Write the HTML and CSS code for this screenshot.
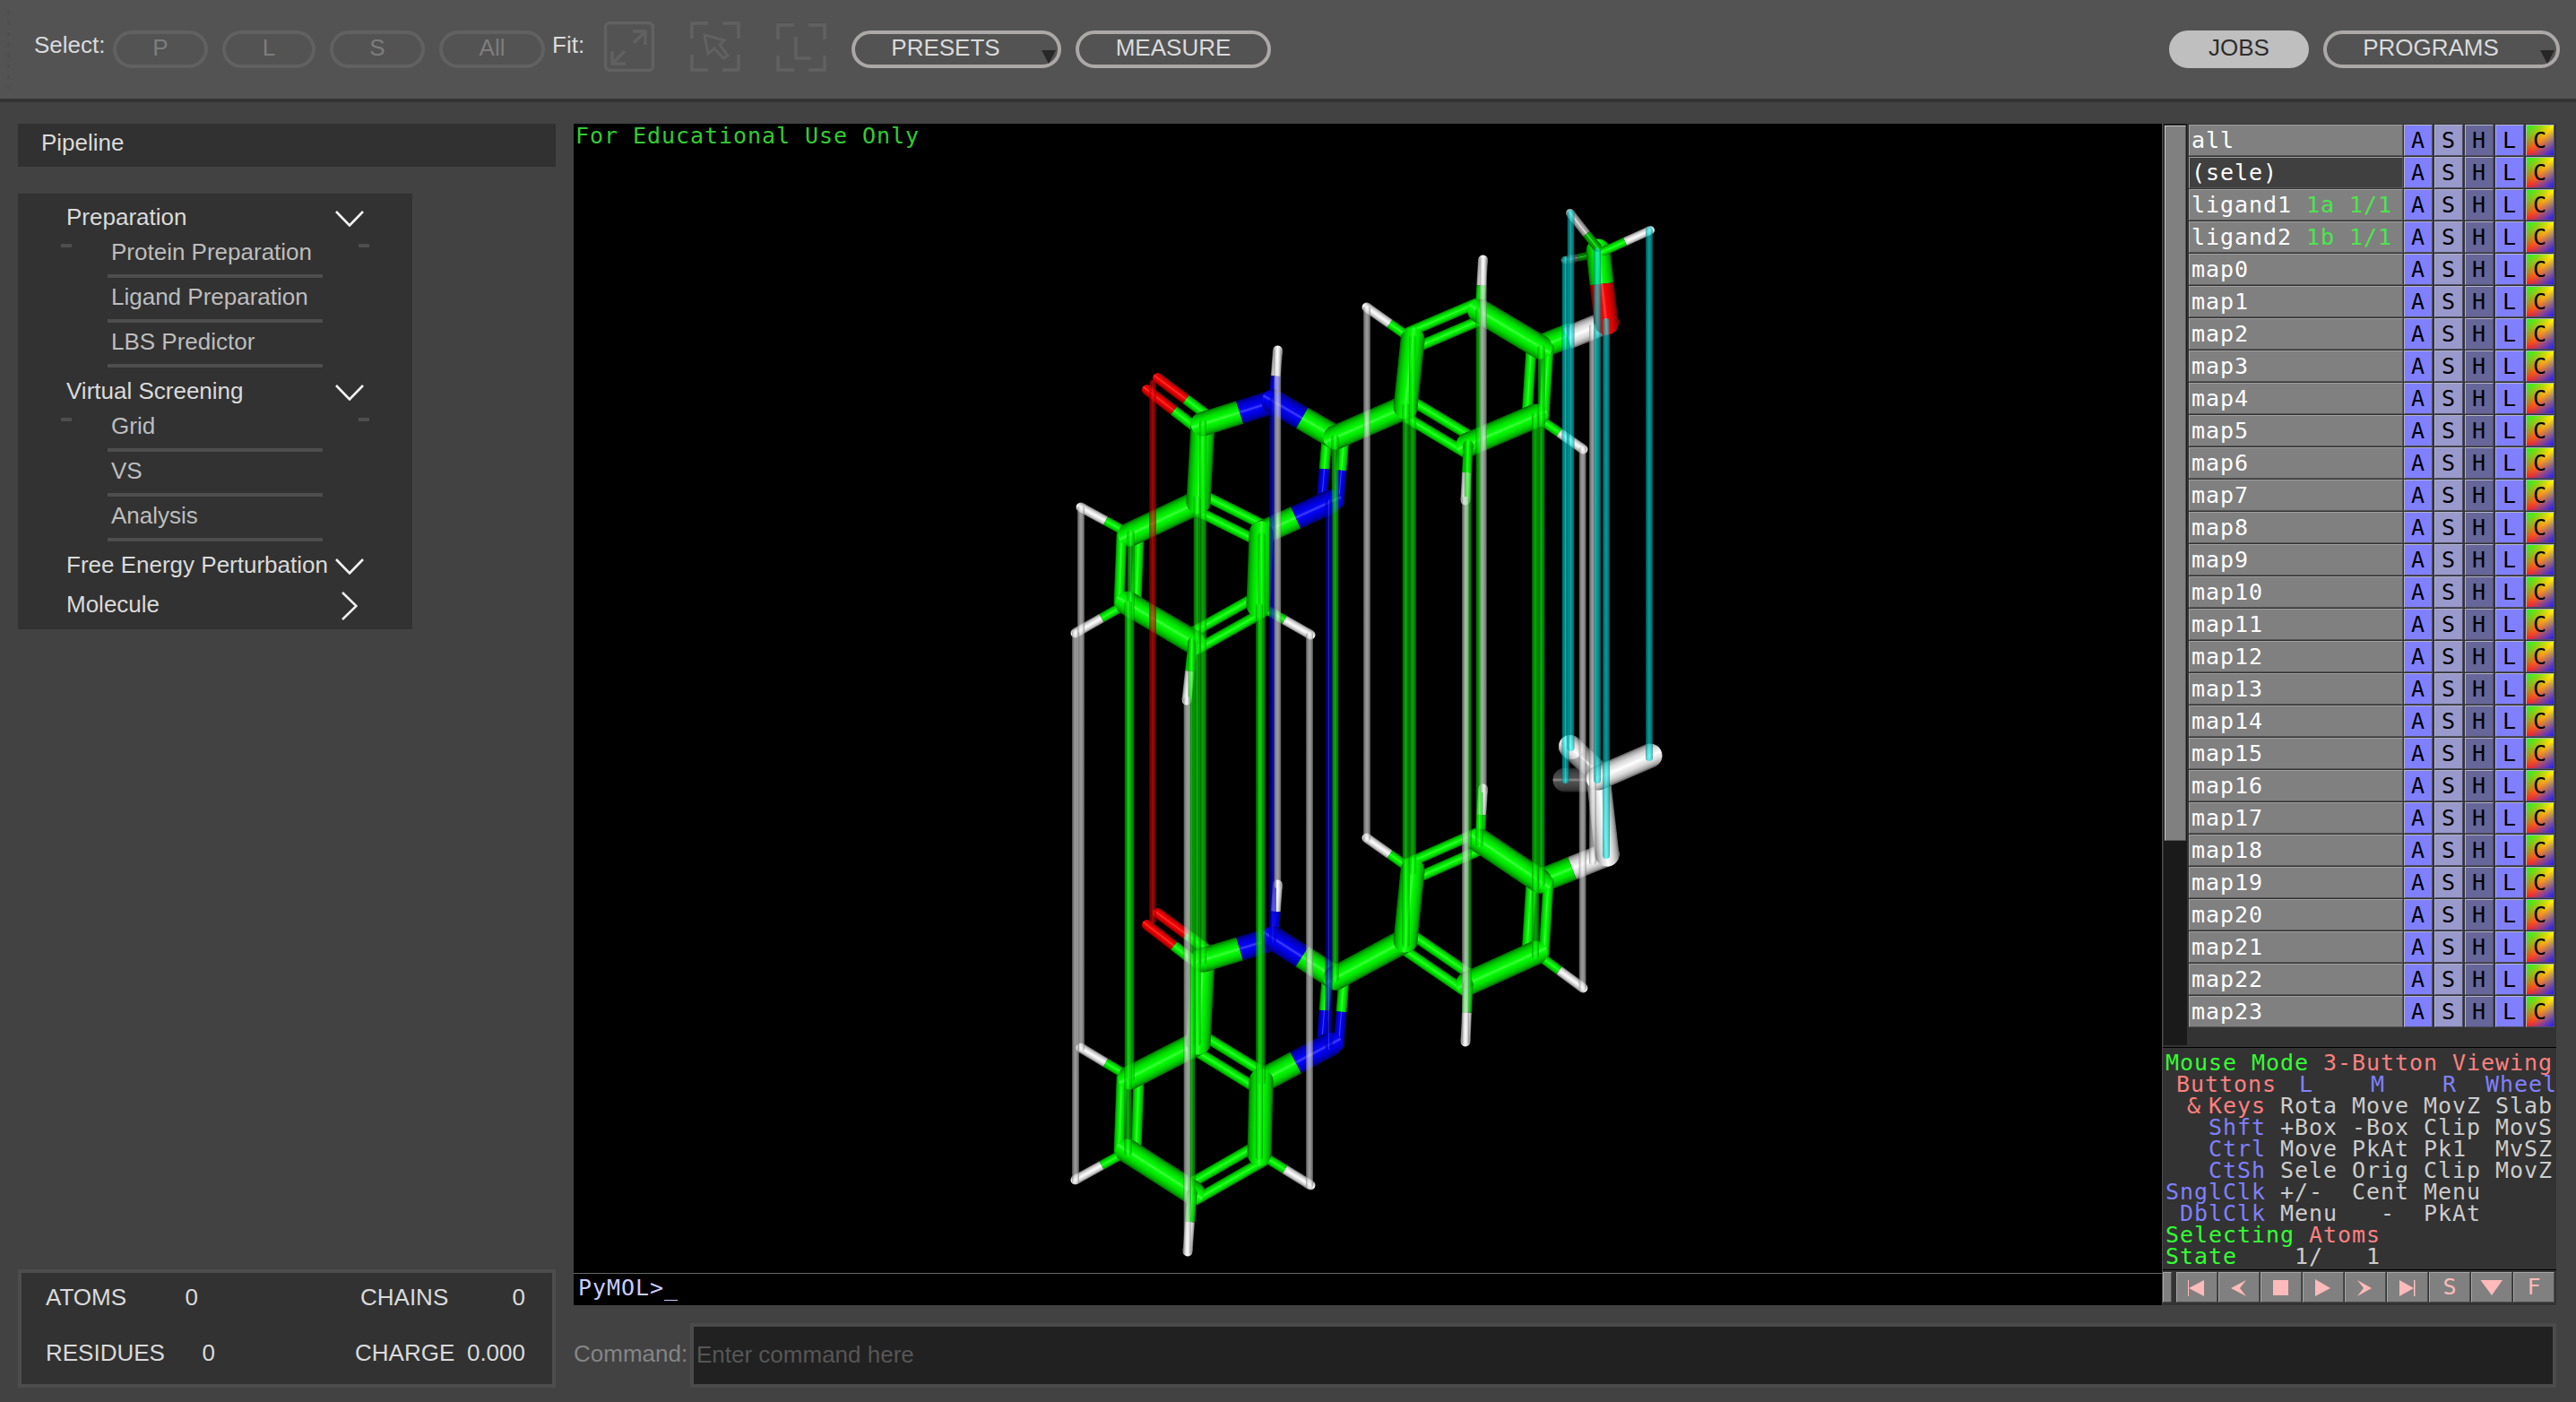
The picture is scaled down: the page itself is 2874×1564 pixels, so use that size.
FILE: index.html
```html
<!DOCTYPE html>
<html lang="en">
<head>
<meta charset="utf-8">
<title>Pipeline</title>
<link rel="stylesheet" href="styles.css">
</head>
<body>
<header class="toolbar">
  <div class="grip"></div>
  <span class="label select-label">Select:</span>
  <div class="select-group">
    <button class="pill off w106">P</button>
    <button class="pill off w104">L</button>
    <button class="pill off w106">S</button>
    <button class="pill off w118">All</button>
  </div>
  <span class="label fit-label">Fit:</span>
  <div class="fit-group">
    <svg class="fit" viewBox="0 0 56 56"><rect x="1.5" y="1.5" width="53" height="53" rx="5"/><path d="M32 11H46V26M46 11L33 24M9 33V47H24M10 46L23 33"/></svg>
    <svg class="fit" viewBox="0 0 56 56"><path d="M2 19V2H20M36 2H54V19M2 37V54H20M36 54H54V37"/><path class="thin" d="M16 15L38 21L33 26L42 38L37 41L27 30L20 36Z"/></svg>
    <svg class="fit" viewBox="0 0 56 56"><path d="M2 20V4H20M36 4H54V20M2 38V54H20M36 54H54V38M22 17V41H39"/></svg>
  </div>
  <div class="action-group">
    <button class="pill menu w234">PRESETS<i class="tri"></i></button>
    <button class="pill w218">MEASURE</button>
  </div>
  <div class="right-group">
    <button class="pill solid w156">JOBS</button>
    <button class="pill menu w264">PROGRAMS<i class="tri"></i></button>
  </div>
</header>
<main class="main">
  <aside class="left">
    <h1 class="title">Pipeline</h1>
    <nav class="tree">
      <div class="head">Preparation<svg class="chev" viewBox="0 0 32 18"><path d="M1 1L16 16.5L31 1"/></svg></div>
      <div class="group">
        <i class="dash"></i>
        <ul><li>Protein Preparation</li><li>Ligand Preparation</li><li>LBS Predictor</li></ul>
        <i class="dash"></i>
      </div>
      <div class="head">Virtual Screening<svg class="chev" viewBox="0 0 32 18"><path d="M1 1L16 16.5L31 1"/></svg></div>
      <div class="group">
        <i class="dash"></i>
        <ul><li>Grid</li><li>VS</li><li>Analysis</li></ul>
        <i class="dash"></i>
      </div>
      <div class="head fep">Free Energy Perturbation<svg class="chev" viewBox="0 0 32 18"><path d="M1 1L16 16.5L31 1"/></svg></div>
      <div class="head mol">Molecule<svg class="chev side" viewBox="0 0 18 32"><path d="M1 1L16.5 16L1 31"/></svg></div>
    </nav>
    <section class="stats">
      <div class="stat"><span>ATOMS</span><b class="n1">0</b><span class="end">CHAINS</span><b class="n2">0</b></div>
      <div class="stat"><span>RESIDUES</span><b class="n1 shift">0</b><span class="end wide">CHARGE</span><b class="n2">0.000</b></div>
    </section>
  </aside>
  <section class="work">
    <div class="viewer">
      <div class="scene">
        <div class="canvas">
          <svg id="mol" viewBox="640 138 1772 1282"></svg>
          <p class="edu">For Educational Use Only</p>
        </div>
        <p class="prompt">PyMOL&gt;_</p>
      </div>
      <div class="panel">
        <div class="objects">
          <div class="track"><div class="thumb"></div></div>
          <div class="rows" id="rows"></div>
        </div>
        <div class="mouse">
          <p><span class="g">Mouse Mode</span> <span class="r">3-Button Viewing</span></p>
          <div class="keys top"><span class="k r">Buttons</span><span>L</span><span>M</span><span>R</span><span class="wheel">Wheel</span></div>
          <div class="keys"><span class="k r amp">&amp; Keys</span><span>Rota</span><span>Move</span><span>MovZ</span><span>Slab</span></div>
          <div class="keys"><span class="k">Shft</span><span>+Box</span><span>-Box</span><span>Clip</span><span>MovS</span></div>
          <div class="keys"><span class="k">Ctrl</span><span>Move</span><span>PkAt</span><span>Pk1</span><span>MvSZ</span></div>
          <div class="keys"><span class="k">CtSh</span><span>Sele</span><span>Orig</span><span>Clip</span><span>MovZ</span></div>
          <div class="keys"><span class="k">SnglClk</span><span>+/-</span><span>Cent</span><span>Menu</span></div>
          <div class="keys"><span class="k">DblClk</span><span>Menu</span><span>  -</span><span>PkAt</span></div>
          <p><span class="g">Selecting</span> <span class="r">Atoms</span></p>
          <p><span class="g">State</span>    1/   1</p>
        </div>
        <div class="player">
          <i class="stub"></i>
          <button><svg viewBox="0 0 46 34"><path d="M13 9h1v18h-1zM14 18L31 9V27Z"/></svg></button>
          <button><svg viewBox="0 0 46 34"><path d="M14 18L31 9L24 18L31 27Z"/></svg></button>
          <button><svg viewBox="0 0 46 34"><path d="M14 9h17v17H14z"/></svg></button>
          <button><svg viewBox="0 0 46 34"><path d="M14 8L31 18L14 27Z"/></svg></button>
          <button><svg viewBox="0 0 46 34"><path d="M14 9L30 18L14 27L21 18Z"/></svg></button>
          <button><svg viewBox="0 0 46 34"><path d="M14 9L30 18L14 27ZM30 9h1.5v18H30z"/></svg></button>
          <button>S</button>
          <button><svg viewBox="0 0 46 34"><path d="M10.5 9H35L23 26Z"/></svg></button>
          <button>F</button>
        </div>
      </div>
    </div>
    <div class="command"><label>Command:</label><div class="input">Enter command here</div></div>
  </section>
</main>
<script src="script.js"></script>
</body>
</html>
```
FILE: styles.css
```css
* { box-sizing: border-box; margin: 0; padding: 0; }
body { width: 2874px; height: 1564px; overflow: hidden; background: #424242; color: #dadada; font: 26px/30px "Liberation Sans", Arial, sans-serif; }
button { font: inherit; color: inherit; background: none; border: 0; }
ul { list-style: none; }

.toolbar { height: 114px; display: flex; align-items: flex-start; padding: 0 18px 0 8px; background: #535353; border-bottom: 4px solid #333; }
.grip { width: 3px; height: 87px; margin-top: 12px; background: repeating-linear-gradient(#4e4e4e 0 4px, transparent 4px 12px); }
.label { margin-top: 35px; }
.select-label { width: 88px; margin-left: 27px; }
.fit-label { width: 58px; margin-left: 8px; }
.select-group, .action-group, .right-group { display: flex; gap: 16px; margin-top: 34px; }
.action-group { margin-left: 28px; }
.right-group { margin-left: auto; }
.pill { position: relative; height: 42px; padding-bottom: 4px; line-height: 30px; border: 4px solid #aca8a8; border-radius: 21px; }
.pill.off { color: #7d7d7d; border-color: #616161; }
.pill.solid { color: #2d2d2d; background: #bfbfbf; border-color: #bfbfbf; }
.pill.menu { padding-right: 24px; }
.tri { position: absolute; right: 2px; top: 18px; width: 16px; height: 15px; background: #272727; clip-path: polygon(0 0, 100% 0, 50% 100%); }
.w104 { width: 104px; } .w106 { width: 106px; } .w118 { width: 118px; } .w156 { width: 156px; }
.w218 { width: 218px; } .w234 { width: 234px; } .w264 { width: 264px; }
.fit-group { display: flex; gap: 40px; margin-top: 24px; }
.fit { width: 56px; height: 56px; fill: none; stroke: #616161; stroke-width: 3.5; }
.fit .thin { stroke-width: 3; }

.main { display: flex; gap: 20px; height: 1450px; padding: 24px 22px 16px 20px; }
.left { width: 600px; display: flex; flex-direction: column; }
.title { height: 48px; padding: 6px 26px; font-size: 26px; font-weight: 400; background: #313131; }
.tree { width: 440px; height: 486px; margin-top: 30px; padding-top: 11px; background: #323232; }
.head { display: flex; justify-content: space-between; height: 45px; padding: 0 54px; white-space: nowrap; }
.chev { width: 32px; height: 18px; margin-top: 8px; fill: none; stroke: #f2f2f2; stroke-width: 2.6; flex: none; }
.chev.side { width: 18px; height: 32px; margin: 1px 7px 0 0; }
.fep { height: 44px; }
.group { display: flex; justify-content: space-between; height: 149px; padding: 0 48px; }
.dash { width: 12px; height: 4px; background: #4e4e4e; }
.group ul { width: 240px; color: #bdbdbd; }
.group li { height: 50px; padding: 6px 4px 0; border-bottom: 4px solid #4e4e4e; }
.group li:first-child { height: 38px; padding-top: 0; line-height: 18px; }
.stats { margin-top: auto; height: 132px; padding: 12px 30px 0 27px; background: #323232; border: 4px solid #4d4d4d; }
.stat { display: flex; height: 62px; }
.stat b { font-weight: 400; text-align: right; }
.stat span:first-child { width: 128px; }
.n1 { width: 42px; }
.n1.shift { width: 61px; }
.end { margin-left: auto; width: 97px; }
.n2 { width: 87px; }
.end.wide { width: 103px; }

.work { width: 2212px; display: flex; flex-direction: column; gap: 20px; }
.viewer { display: flex; height: 1318px; font: 25px/24px "DejaVu Sans Mono", "Liberation Mono", monospace; letter-spacing: 0.95px; }
.scene { width: 1772px; display: flex; flex-direction: column; background: #000; }
.canvas { position: relative; height: 1283px; border-bottom: 1px solid #666; }
.canvas svg { display: block; width: 1772px; height: 1282px; }
.edu { position: absolute; left: 2px; top: 0; color: #33cc33; line-height: 27px; }
.prompt { padding-left: 5px; color: #ccccff; line-height: 32px; }
.panel { width: 440px; display: flex; flex-direction: column; background: #333; border-left: 1px solid #4d4d4d; }
.objects { display: flex; gap: 2px; height: 1030px; padding-left: 1px; }
.track { width: 26px; height: 1028px; padding: 2px 1px; background: #1a1a1a; }
.thumb { height: 798px; background: #808080; border: 1px solid #555; border-top-color: #ccc; border-left-color: #ccc; }
.rows { padding-top: 1px; }
.row { display: grid; grid-template-columns: 239px repeat(5, 33px); column-gap: 1px; height: 36px; color: #000; }
.row > * { height: 35px; line-height: 34px; border: 1px solid #4d4d66; border-top-color: #b3b3cc; border-left-color: #b3b3cc; text-align: center; }
.row .name { padding-left: 2px; text-align: left; white-space: pre; color: #fff; background: #808080; border-color: #a0a0a0 #555 #555 #a0a0a0; }
.row .sel { background: #404040; }
.row em { font-style: normal; color: #4de64d; }
.row span { width: 32px; }
.a { background: #8080ff; } .s { background: #9999cc; } .h { background: #666699; } .l { background: #8080ff; }
.c { background: linear-gradient(to bottom right, #1aff1a, rgba(26,255,26,0) 50%, rgba(26,26,255,0) 50%, #1a1aff), linear-gradient(to top right, #ff1a1a, #ff8c19 50%, #ffff00); }
.mouse { height: 249px; padding: 5px 0 0 3px; color: #ccc; border-top: 1px solid #000; border-bottom: 1px solid #000; }
.mouse p, .keys span { height: 24px; white-space: pre; }
.g { color: #33ff33; }
.keys { display: grid; grid-template-columns: 128px 80px 80px 80px 80px; height: 24px; }
.k { width: 112px; text-align: right; color: #8080ff; }
.keys.top { color: #8080ff; }
.keys.top .k { width: 124px; }
.keys.top span + span { padding-left: 21px; }
.keys.top span.wheel { padding: 0; margin-left: -11px; }
.amp { word-spacing: -8px; }
.r, .k.r { color: #ff8080; }
.player { display: flex; gap: 1px; height: 36px; padding-top: 2px; }
.player > * { width: 46px; height: 34px; background: #808080; border: 1px solid #4d4d4d; border-top-color: #a6a6a6; border-left-color: #a6a6a6; color: #ffbaba; line-height: 32px; text-align: center; letter-spacing: 0; }
.player .stub { width: 10px; margin-right: 4px; }
.player svg { display: block; width: 46px; height: 34px; margin: -1px; fill: #ffbaba; }

.command { display: flex; height: 72px; }
.command label { width: 130px; padding-top: 19px; color: #858585; }
.input { flex: 1; padding: 16px 3px; color: #565656; background: #212121; border: 4px solid #4b4b4b; }
```
FILE: script.js
```js
// Object list
const names = ['all', '(sele)', ['ligand1', '1a 1/1'], ['ligand2', '1b 1/1']];
for (let i = 0; i < 24; i++) names.push('map' + i);
document.getElementById('rows').innerHTML = names.map(n => {
  const label = Array.isArray(n) ? `${n[0]} <em>${n[1]}</em>` : n;
  const cls = n === '(sele)' ? 'name sel' : 'name';
  return `<div class="row"><div class="${cls}">${label}</div>` +
    ['A', 'S', 'H', 'L', 'C'].map(c => `<span class="${c.toLowerCase()}">${c}</span>`).join('') + '</div>';
}).join('');

// Stick rendering: each rod is a stroke shaded across its width
const G = [0, 245, 0], B = [0, 0, 238], R = [240, 0, 0], W = [235, 235, 235], D = [75, 75, 75], M = [175, 175, 175];
let defs = '', body = '', id = 0;
const tone = (c, k, add) => `rgb(${c.map(v => Math.min(255, Math.round(v * k + add))).join()})`;
function shade(x1, y1, x2, y2, w, c) {
  const len = Math.hypot(x2 - x1, y2 - y1), nx = -(y2 - y1) / len * w / 2, ny = (x2 - x1) / len * w / 2;
  const stops = [[0, .4, 0], [.1, .7, 0], [.26, .92, 0], [.42, 1, 5], [.5, 1.04, 65], [.58, 1, 5], [.74, .92, 0], [.9, .7, 0], [1, .4, 0]];
  defs += `<linearGradient id="s${++id}" gradientUnits="userSpaceOnUse" x1="${x1 - nx}" y1="${y1 - ny}" x2="${x1 + nx}" y2="${y1 + ny}">` +
    stops.map(s => `<stop offset="${s[0]}" stop-color="${tone(c, s[1], s[2])}"/>`).join('') + '</linearGradient>';
  return `url(#s${id})`;
}
function seg(x1, y1, x2, y2, w, c, cap) {
  body += `<line x1="${x1}" y1="${y1}" x2="${x2}" y2="${y2}" stroke="${shade(x1, y1, x2, y2, w, c)}" stroke-width="${w}" stroke-linecap="${cap}"/>`;
}
function rod(a, b, w, c1, c2, t = .5) {
  if (!c2 || c1 === c2) return seg(...a, ...b, w, c1, 'round');
  const m = [a[0] + (b[0] - a[0]) * t, a[1] + (b[1] - a[1]) * t];
  const e = [a[0] + (b[0] - a[0]) * .04, a[1] + (b[1] - a[1]) * .04];
  const f = [b[0] - (b[0] - a[0]) * .04, b[1] - (b[1] - a[1]) * .04];
  seg(...a, ...e, w, c1, 'round'); seg(...a, ...m, w, c1, 'butt');
  seg(...f, ...b, w, c2, 'round'); seg(...m, ...b, w, c2, 'butt');
}
function twin(a, b, c1, c2) {
  const l = Math.hypot(b[0] - a[0], b[1] - a[1]), dx = -(b[1] - a[1]) / l * 9.5, dy = (b[0] - a[0]) / l * 9.5;
  for (const k of [1, -1]) rod([a[0] + dx * k, a[1] + dy * k], [b[0] + dx * k, b[1] + dy * k], 12, c1, c2);
}
function molecule(p) {
  twin(p.c4a, p.c8a, G); twin(p.c5, p.c6, G); twin(p.c7, p.c8, G); twin(p.c2, p.n1, G, B);
  twin(p.p2, p.p3, G); twin(p.p4, p.p5, G); twin(p.p6, p.p1, G);
  rod(p.oa, p.ca, 12, R, G, .6); rod(p.ob, p.cb, 12, R, G, .56);
  for (const [h, c] of [['h5', 'c5'], ['h6', 'c6'], ['h8', 'c8'], ['g2', 'p2'], ['g3', 'p3'], ['g5', 'p5']]) rod(p[h], p[c], 11, W, G);
  rod(p.hn, p.n3, 11, W, B);
  rod(p.c7, p.c6, 27, G); rod(p.c5, p.c4a, 27, G); rod(p.c4a, p.c4, 27, G);
  rod(p.c4, p.n3, 27, G, B, .52); rod(p.n3, p.c2, 27, B, G, .46); rod(p.n1, p.c8a, 27, B, G, .5);
  rod(p.c8a, p.c8, 27, G); rod(p.c2, p.p1, 27, G); rod(p.p1, p.p2, 27, G); rod(p.p3, p.p4, 27, G); rod(p.p5, p.p6, 27, G);
  rod(p.h7, p.c7, 11, W, G); rod(p.g6, p.p6, 11, W, G);
}
// Ligand 1
const ligand1 = { c4: [1342, 473], ca: [1344, 461], cb: [1333, 476], oa: [1292, 422], ob: [1280, 435], n3: [1421, 448], hn: [1425.5, 391], c2: [1490, 488],
  n1: [1484, 560], c8a: [1407, 595], c4a: [1337, 560], c5: [1261, 596], c6: [1258, 673], c7: [1331, 716], c8: [1404, 675],
  h5: [1206, 566], h6: [1200, 706], h7: [1324, 781], h8: [1462, 708],
  p1: [1568, 454], p2: [1576, 379], p3: [1651, 347], p4: [1718, 387], p5: [1713, 464], p6: [1638, 496],
  g2: [1525, 343], g3: [1654.5, 290], g5: [1766, 501], g6: [1635, 558] };
rod([1746, 290], [1778, 284], 9, D, [0, 130, 0], .45);
rod([1718, 387], [1751, 374], 27, G);
rod([1793, 360], [1762, 372], 26, R);
seg(1749, 377, 1783, 363, 26, W, 'butt');
rod([1783, 280], [1792, 360], 27, G, R, .46);
rod([1752, 238], [1782, 276], 10, M, [0, 180, 0], .6);
rod([1841, 257], [1790, 280], 10, W, G, .55);
molecule(ligand1);
// Ligand 2
const ligand2 = { c4: [1342, 1071], ca: [1345, 1058], cb: [1333, 1073], oa: [1292, 1019], ob: [1280, 1032], n3: [1421, 1047], hn: [1425.5, 987], c2: [1490, 1091],
  n1: [1484, 1165], c8a: [1407, 1206], c4a: [1337, 1163], c5: [1261, 1202], c6: [1258, 1284], c7: [1330, 1330], c8: [1405, 1287],
  h5: [1206, 1169], h6: [1200, 1316], h7: [1325, 1396], h8: [1462, 1322],
  p1: [1568, 1049], p2: [1576, 971], p3: [1651, 938], p4: [1718, 983], p5: [1713, 1063], p6: [1638, 1097],
  g2: [1525, 935], g3: [1654.5, 880], g5: [1766, 1102], g6: [1635, 1162] };
rod([1746, 870], [1785, 870], 27, D);
rod([1793, 953], [1718, 983], 27, W, G, .52);
rod([1783, 866], [1793, 953], 27, W);
rod([1752, 833], [1783, 862], 26, M);
rod([1752, 833], [1753, 834], 26, W);
rod([1841, 843], [1783, 868], 27, W);
molecule(ligand2);

// Translucent rods that join matching atoms
function link(x, y1, y2, c) {
  body += `<g opacity=".62">`; seg(x, y1, x, y2, 8, c, 'round'); body += '</g>';
}
[[1342, 472, 1073], [1335.5, 557, 1163], [1261.5, 595, 1203], [1258.5, 674, 1286], [1329.5, 716, 1330], [1407.7, 598, 1206],
 [1405, 677, 1290], [1489.5, 489, 1092], [1568.5, 454, 1053], [1576, 378, 972], [1650.5, 347, 941], [1719.5, 389, 986],
 [1713, 464, 1066], [1637.8, 496, 1099]].forEach(l => link(...l, G));
link(1286, 428, 1026, [225, 0, 0]);
link(1420, 448, 1048, B); link(1482.5, 561, 1167, B);
[[1206, 568, 1169], [1200, 707, 1317], [1324.5, 781, 1396], [1461, 709, 1322], [1425.3, 392, 987], [1525, 345, 935],
 [1654.8, 291, 880], [1635, 558, 1162], [1765.7, 502, 1102], [1777, 365, 961]].forEach(l => link(...l, W));
[[1746.5, 290, 870], [1752.5, 238, 834], [1782, 281, 870], [1792, 359, 954], [1840, 257, 845]].forEach(l => link(...l, [0, 225, 225]));
document.getElementById('mol').innerHTML = `<defs>${defs}</defs>${body}`;
```
